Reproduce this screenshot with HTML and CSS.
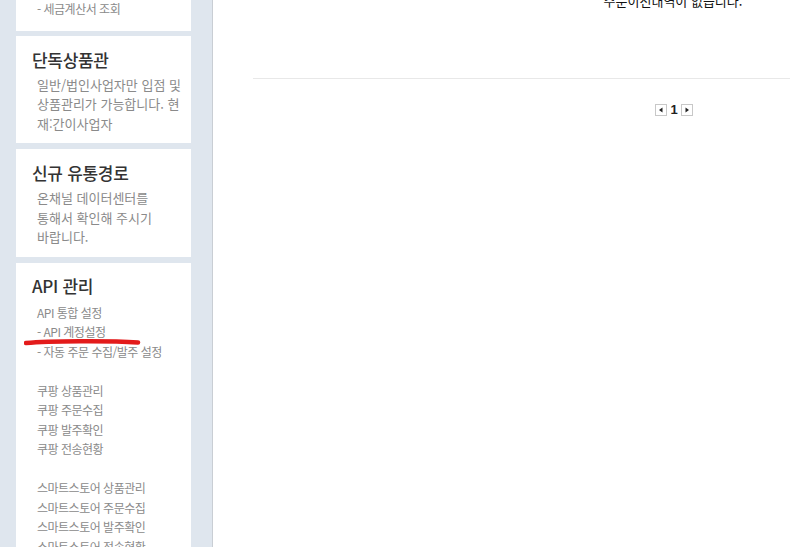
FILE: index.html
```html
<!DOCTYPE html>
<html lang="ko">
<head>
<meta charset="utf-8">
<link rel="stylesheet" href="styles.css">
</head>
<body>
<div class="page">
  <aside class="sidebar">
    <div class="card card-top">
      <div class="item">- 세금계산서 조회</div>
    </div>
    <div class="card">
      <h2 class="title">단독상품관</h2>
      <p class="desc breakall">일반/법인사업자만 입점 및 상품관리가 가능합니다. 현재:간이사업자</p>
    </div>
    <div class="card">
      <h2 class="title">신규 유통경로</h2>
      <p class="desc narrow">온채널 데이터센터를 통해서 확인해 주시기 바랍니다.</p>
    </div>
    <div class="card card-api">
      <h2 class="title">API 관리</h2>
      <ul class="items">
        <li class="item">API 통합 설정</li>
        <li class="item">- API 계정설정</li>
        <li class="item">- 자동 주문 수집/발주 설정</li>
        <li class="item gap"></li>
        <li class="item">쿠팡 상품관리</li>
        <li class="item">쿠팡 주문수집</li>
        <li class="item">쿠팡 발주확인</li>
        <li class="item">쿠팡 전송현황</li>
        <li class="item gap"></li>
        <li class="item">스마트스토어 상품관리</li>
        <li class="item">스마트스토어 주문수집</li>
        <li class="item">스마트스토어 발주확인</li>
        <li class="item">스마트스토어 전송현황</li>
      </ul>
      <svg class="mark" width="124" height="10" viewBox="0 0 124 10">
        <path d="M2 6 C 25 4, 85 3.5, 114 5.5" fill="none" stroke="#e31b1b" stroke-width="4.5" stroke-linecap="round"/>
      </svg>
    </div>
  </aside>
  <main class="main">
    <div class="content">
      <p class="empty">주문이전내역이 없습니다.</p>
      <div class="rule"></div>
      <div class="pager">
        <span class="pbtn"><svg width="6" height="6" viewBox="0 0 6 6"><path d="M4.5 0.5 L1 3 L4.5 5.5 Z" fill="#222"/></svg></span>
        <span class="pnum">1</span>
        <span class="pbtn"><svg width="6" height="6" viewBox="0 0 6 6"><path d="M1.5 0.5 L5 3 L1.5 5.5 Z" fill="#222"/></svg></span>
      </div>
    </div>
  </main>
</div>
</body>
</html>
```
FILE: styles.css
```css
html, body {
  margin: 0;
  padding: 0;
  height: 100%;
  overflow: hidden;
}
body {
  font-family: "Noto Sans CJK KR", "Noto Sans", sans-serif;
  background: #fff;
}
.page {
  display: flex;
  height: 547px;
}
.sidebar {
  width: 213px;
  flex: none;
  background: #dfe6ee;
  border-right: 1px solid #c9ced4;
  box-sizing: border-box;
  padding-left: 16px;
  display: flex;
  flex-direction: column;
  gap: 6px;
  overflow: hidden;
}
.card {
  width: 175px;
  background: #fff;
  box-sizing: border-box;
  padding: 12px 8px 10px 16px;
  flex: none;
  position: relative;
}
.card-top {
  margin-top: -1px;
  padding: 0 8px 12px 21px;
  margin-bottom: -1px;
}
.title {
  margin: 0 0 3px;
  font-size: 17px;
  line-height: 24px;
  font-weight: 500;
  color: #333;
  letter-spacing: -0.3px;
}
.desc {
  margin: 0;
  padding-left: 5px;
  font-size: 13px;
  line-height: 19.5px;
  color: #8a8a8a;
  word-break: keep-all;
}
.desc.breakall {
  word-break: break-all;
}
.desc.narrow {
  padding-right: 24px;
}
.card-api {
  padding-top: 11px;
  padding-bottom: 20px;
}
.card-api .title {
  margin-bottom: 5px;
}
.items {
  list-style: none;
  margin: 0;
  padding: 0 0 0 5px;
}
.item {
  font-size: 12px;
  line-height: 19.5px;
  height: 19.5px;
  color: #8a8a8a;
  letter-spacing: -0.5px;
  white-space: nowrap;
}
.mark {
  position: absolute;
  left: 8px;
  top: 74px;
}
.main {
  flex: 1;
  overflow: hidden;
  background: #fff;
}
.content {
  width: 840px;
  margin-left: 40px;
}
.empty {
  margin: -9px 0 0;
  text-align: center;
  font-size: 13px;
  line-height: 20px;
  color: #111;
}
.rule {
  margin-top: 67px;
  border-top: 1px solid #e8e8e8;
}
.pager {
  margin-top: 24px;
  display: flex;
  justify-content: center;
  align-items: center;
  gap: 3px;
  padding-left: 2px;
}
.pbtn {
  width: 10px;
  height: 10px;
  border: 1px solid #c8c8c8;
  display: flex;
  align-items: center;
  justify-content: center;
  background: #fff;
}
.pnum {
  font-family: "Liberation Sans", Arial, sans-serif;
  font-size: 13px;
  font-weight: bold;
  color: #222;
  line-height: 13px;
}
```
